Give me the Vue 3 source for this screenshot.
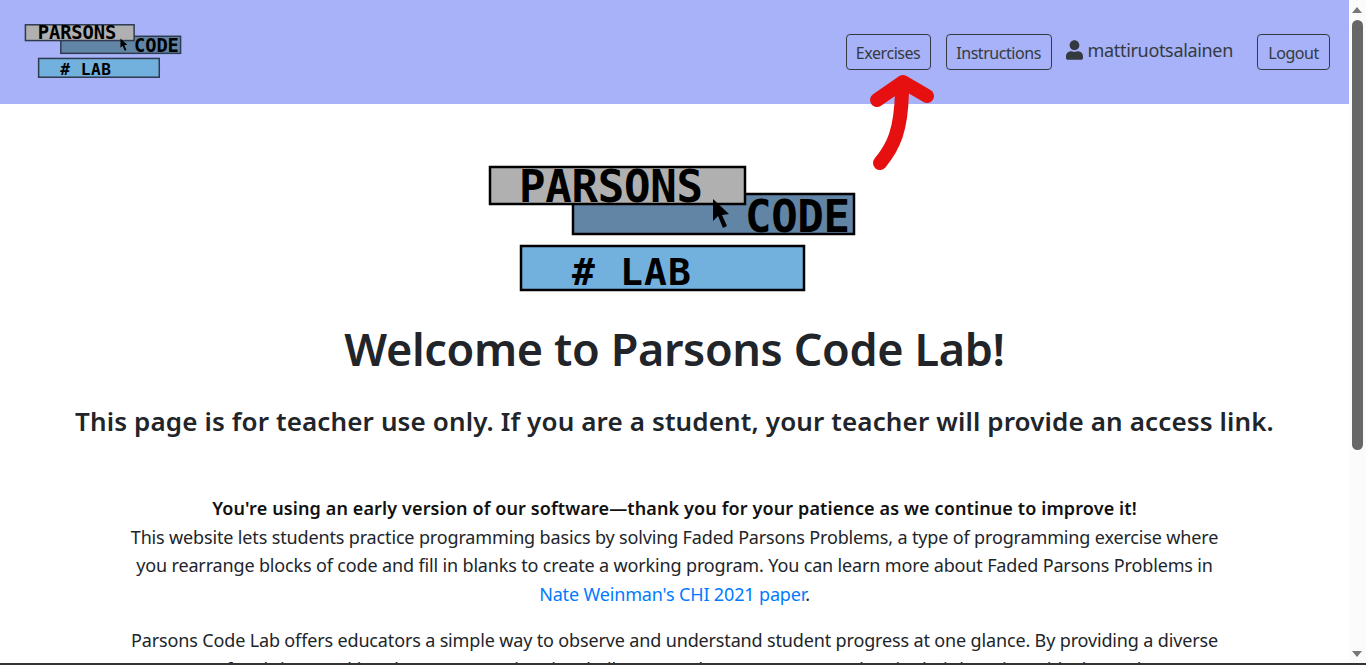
<script setup>
</script>

<template>
  <div class="shot">
    <div class="page">
      <header class="nav">
        <svg class="logo nav-logo" viewBox="0 0 366 125" aria-label="Parsons Code Lab logo">
          <rect x="84" y="28" width="281" height="40" fill="#6285a6" stroke="#000" stroke-width="2.5"/>
          <rect x="1" y="1" width="255" height="37" fill="#b0b0b0" stroke="#000" stroke-width="2.5"/>
          <rect x="32" y="80" width="283" height="44" fill="#72b0de" stroke="#000" stroke-width="2.5"/>
          <text x="30" y="34" class="logo-t" font-size="44" textLength="184">PARSONS</text>
          <text x="256" y="66" class="logo-t" font-size="44" textLength="105">CODE</text>
          <text x="83" y="119" class="logo-t" font-size="38" textLength="119" xml:space="preserve"># LAB</text>
          <path d="M224 33l0 22 5-5 5 12 4-2-5-11 7-1z" fill="#000"/>
        </svg>
        <div class="nav-items">
          <a class="btn ex">Exercises</a>
          <a class="btn ins">Instructions</a>
          <span class="user">
            <svg class="user-icon" viewBox="0 0 448 512"><path fill="#343a40" d="M224 256c70.700 0 128-57.300 128-128S294.700 0 224 0 96 57.300 96 128s57.300 128 128 128zm89.600 32h-16.700c-22.200 10.200-46.900 16-72.900 16s-50.600-5.800-72.900-16h-16.700C60.200 288 0 348.200 0 422.400V464c0 26.500 21.500 48 48 48h352c26.500 0 48-21.500 48-48v-41.600c0-74.200-60.200-134.400-134.400-134.400z"/></svg>
            mattiruotsalainen
          </span>
          <a class="btn log">Logout</a>
        </div>
      </header>
      <main class="main">
        <svg class="logo hero-logo" viewBox="0 0 366 125" aria-label="Parsons Code Lab logo">
          <rect x="84" y="28" width="281" height="40" fill="#6285a6" stroke="#000" stroke-width="2.5"/>
          <rect x="1" y="1" width="255" height="37" fill="#b0b0b0" stroke="#000" stroke-width="2.5"/>
          <rect x="32" y="80" width="283" height="44" fill="#72b0de" stroke="#000" stroke-width="2.5"/>
          <text x="30" y="36" class="logo-t" font-size="44" textLength="184">PARSONS</text>
          <text x="256" y="66" class="logo-t" font-size="44" textLength="105">CODE</text>
          <text x="83" y="119" class="logo-t" font-size="38" textLength="119" xml:space="preserve"># LAB</text>
          <path d="M224 33l0 22 5-5 5 12 4-2-5-11 7-1z" fill="#000"/>
        </svg>
        <h1>Welcome to Parsons Code Lab!</h1>
        <h4>This page is for teacher use only. If you are a student, your teacher will provide an access link.</h4>
        <p class="intro">
          <strong>You're using an early version of our software—thank you for your patience as we continue to improve it!</strong><br>
          This website lets students practice programming basics by solving Faded Parsons Problems, a type of programming exercise where you rearrange blocks of code and fill in blanks to create a working program. You can learn more about Faded Parsons Problems in <a class="link">Nate Weinman's CHI 2021 paper</a>.
        </p>
        <p class="intro second">
          Parsons Code Lab offers educators a simple way to observe and understand student progress at one glance. By providing a diverse range of real-time tracking data, you can pinpoint challenges and support every student in their learning with clear, relevant information.
        </p>
      </main>
    </div>
    <div class="scrollbar">
      <span class="arrow up"></span>
      <span class="thumb"></span>
      <span class="arrow down"></span>
    </div>
    <svg class="annot" viewBox="0 0 80 110">
      <path d="M16 93C30 76 37 60 38 22M13 30L39 12 63 26" fill="none" stroke="#e61010" stroke-width="14" stroke-linecap="round" stroke-linejoin="round"/>
    </svg>
    <div class="bottom-edge"></div>
  </div>
</template>

<style>
html, body { margin: 0; height: 100%; overflow: hidden; background: #fff; }
</style>

<style scoped>
.shot {
  position: relative;
  width: 1366px;
  height: 665px;
  overflow: hidden;
  display: flex;
  font-family: "Noto Sans", "Open Sans", sans-serif;
  color: #212529;
}
.page { width: 1349px; flex: none; }
.nav {
  height: 104px;
  background: #a7b2f8;
  display: flex;
  justify-content: space-between;
  padding: 0 19px 0 25px;
  box-sizing: border-box;
}
.logo { overflow: visible; }
.nav-logo { width: 156px; height: 54px; margin-top: 24px; }
.nav-logo rect { stroke: #2f3a50; stroke-width: 3.5; }
.logo-t { font-family: "DejaVu Sans Mono", monospace; font-weight: 700; fill: #000; }
.nav-items { display: flex; align-items: flex-start; padding-top: 34px; }
.btn {
  box-sizing: border-box;
  height: 36px;
  padding-top: 2px;
  border: 1px solid #343a40;
  border-radius: 4px;
  color: #343a40;
  font-size: 16px;
  letter-spacing: -0.45px;
  display: flex;
  align-items: center;
  justify-content: center;
}
.ex { width: 85px; margin-right: 15px; }
.ins { width: 106px; margin-right: 14px; }
.log { width: 73px; margin-left: 24px; }
.user {
  display: flex;
  align-items: center;
  gap: 5px;
  height: 32px;
  font-size: 18px;
  letter-spacing: -0.33px;
  color: #343a40;
}
.user-icon { width: 17px; height: 20px; }
.main { width: 1100px; margin: 0 auto; text-align: center; }
.hero-logo { display: block; width: 366px; height: 125px; margin: 62px auto 0; transform: translateX(-3px); }
h1 { margin: 31px 0 0; font-size: 45px; line-height: 54px; font-weight: 600; letter-spacing: -0.37px; white-space: nowrap; }
h4 { margin: 30px -60px 0; font-size: 26px; line-height: 30px; font-weight: 600; letter-spacing: 0.13px; white-space: nowrap; }
.intro { margin: 58px 0 0; font-size: 18px; line-height: 28.5px; letter-spacing: -0.15px; color: #212529; }
.intro strong { font-weight: 600; color: #111; letter-spacing: 0.12px; }
.second { margin-top: 18px; }
.link { color: #007bff; }
.scrollbar { width: 17px; flex: none; background: #fbfbfb; position: relative; }
.thumb { position: absolute; left: 3px; width: 11px; top: 20px; height: 430px; background: #676767; border-radius: 6px; }
.arrow { position: absolute; left: 3px; width: 0; height: 0; border-left: 5.5px solid transparent; border-right: 5.5px solid transparent; }
.arrow.up { top: 7px; border-bottom: 6px solid #777; }
.arrow.down { bottom: 8px; border-top: 6px solid #777; }
.annot { position: absolute; left: 864px; top: 70px; width: 80px; height: 110px; }
.bottom-edge { position: absolute; left: 0; right: 0; bottom: 0; height: 2px; background: #333; }
</style>
